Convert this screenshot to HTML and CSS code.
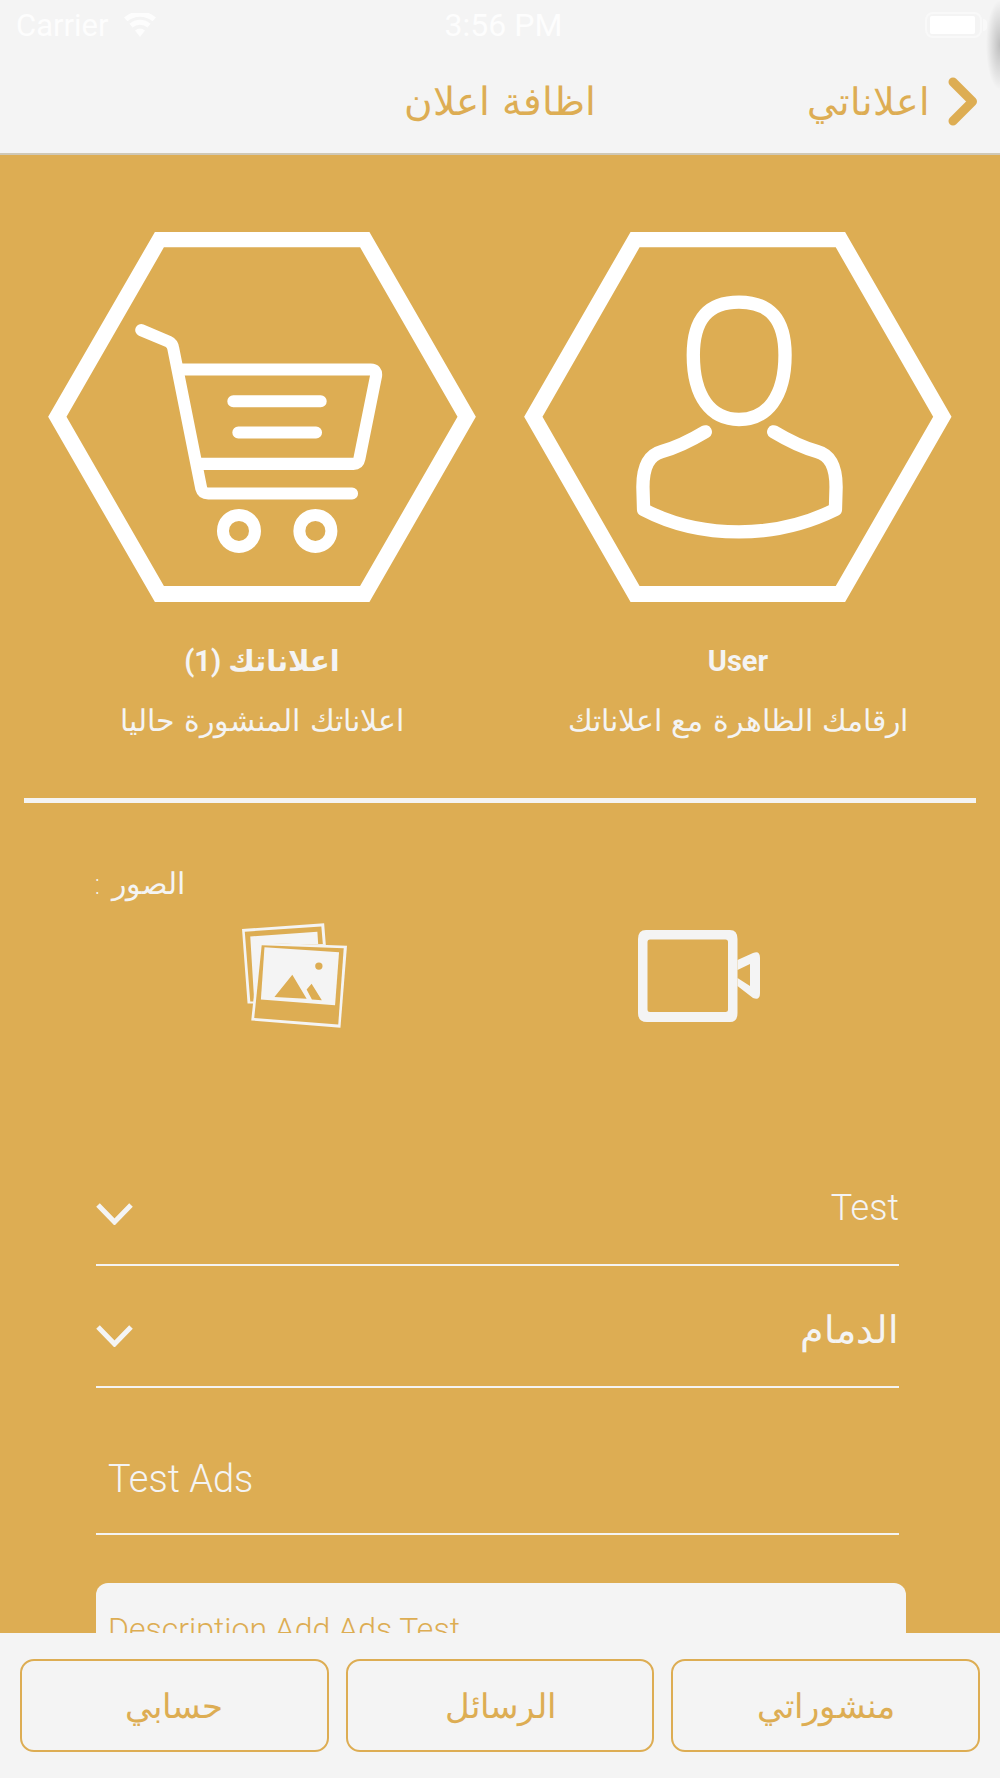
FILE: index.html
```html
<!DOCTYPE html>
<html lang="ar">
<head>
    <meta charset="UTF-8">
    <meta name="viewport" content="width=device-width, initial-scale=1.0">
    <title>اظافة اعلان</title>
    <link rel="stylesheet" href="styles.css">
</head>
<body>
    <div class="app">
        <header class="top">
            <div class="status">
                <div class="status-left">
                    <span>Carrier</span>
                    <svg class="wifi" viewBox="0 0 34 24"><path d="M17 24l-5-6.500a8 8 0 0 1 10 0zM9.500 14.500l-3-3.700a16 16 0 0 1 21 0l-3 3.700a11.500 11.500 0 0 0-15 0zM4.500 8.300L1 4.500a24 24 0 0 1 32 0l-3.500 3.800a19.500 19.500 0 0 0-25 0z"/></svg>
                </div>
                <span class="clock">3:56 PM</span>
                <div class="battery"><i></i></div>
            </div>
            <nav class="nav">
                <span></span>
                <h1 class="nav-title">اظافة اعلان</h1>
                <a class="back">
                    <span>اعلاناتي</span>
                    <svg viewBox="0 0 29 49"><path d="M5 5l19.500 19.500L5 44"/></svg>
                </a>
            </nav>
        </header>

        <main class="content">
            <section class="hero">
                <div class="hero-item">
                    <svg class="hex" viewBox="55 66 1282 1109">
                        <path class="hex-line" fill-rule="evenodd" d="M375 66H1018L1337 620 1018 1175H375L55 620ZM402 112L110 620 402 1127H990L1282 620 990 112Z"/>
                        <g class="hex-icon" stroke-width="36">
                            <path d="M334 360L415 394Q428 400 430 415L514 835Q518 850 535 850H966"/>
                            <path d="M445 478H1022Q1040 478 1038 497L988 745Q985 761 970 761H505"/>
                            <path d="M610 573H872M625 667H858"/>
                            <circle cx="627" cy="962" r="48"/>
                            <circle cx="856" cy="962" r="48"/>
                        </g>
                    </svg>
                    <h2 class="hero-title" dir="rtl">اعلاناتك (1)</h2>
                    <p class="hero-sub">اعلاناتك المنشورة حاليا</p>
                </div>
                <div class="hero-item">
                    <svg class="hex" viewBox="42 66 1282 1109">
                        <path class="hex-line" fill-rule="evenodd" d="M361 66H1004L1323 620 1004 1175H361L42 620ZM388 112L97 620 388 1127H976L1268 620 976 112Z"/>
                        <g class="hex-icon" stroke-width="40">
                            <path d="M686 276C780 276 824 330 824 435 824 560 770 628 686 628 602 628 549 560 549 435 549 330 592 276 686 276Z"/>
                            <path d="M585 665C540 692 500 712 455 724 415 735 398 770 398 830L400 898C480 940 580 965 686 965 790 965 890 940 975 898L977 830C977 770 960 735 920 724 875 712 835 692 790 665"/>
                        </g>
                    </svg>
                    <h2 class="hero-title">User</h2>
                    <p class="hero-sub">ارقامك الظاهرة مع اعلاناتك</p>
                </div>
            </section>

            <hr class="divider">

            <section class="media">
                <p class="media-label" dir="rtl">الصور :</p>
                <div class="media-icons">
                    <svg class="photos" viewBox="11.700 13.300 105.600 105">
                        <path class="light" d="M11.700 19L94.300 13.300 96 35 30 33 23.500 94 17.300 94Z"/>
                        <path class="gold" d="M14.500 21.700L91.500 16.500 93 34 88.300 34 87.500 21.700 20 26.500 24 92 20 92Z"/>
                        <path class="light" d="M29.300 32.700L117.300 36 110.700 118.300 21 111Z"/>
                        <path class="gold" d="M31.500 35.500L114 38.500 108.500 115 24 108.500Z"/>
                        <path class="light" d="M34.300 37.300L109.300 42.300 105.300 95.700 30.700 90Z"/>
                        <path class="gold" d="M62.300 65L76.700 89.300 44.300 87.300ZM81.700 74L92 90.700 82 90 76.700 80Z"/>
                        <circle class="gold" cx="89" cy="56.300" r="3.700"/>
                    </svg>
                    <svg class="video" viewBox="0 0 122 92">
                        <path fill-rule="evenodd" d="M8 0H92Q99.500 0 99.500 9V83Q99.500 92 92 92H9Q0 92 0 83V9Q0 0 8 0ZM12 9.500Q9.500 9.500 9.500 12V79.500Q9.500 82 12 82H87.500Q90 82 90 79.500V12Q90 9.500 87.500 9.500Z"/>
                        <path fill-rule="evenodd" d="M99.500 30L115 23Q122 20 122 28V63Q122 71 115 68L99.500 56ZM99.500 40V48L112 56V34Z"/>
                    </svg>
                </div>
            </section>

            <section class="form">
                <div class="select">
                    <svg class="caret" viewBox="0 0 37 22"><path d="M2 2l16.500 17L35 2"/></svg>
                    <span class="field-text">Test</span>
                </div>
                <div class="select">
                    <svg class="caret" viewBox="0 0 37 22"><path d="M2 2l16.500 17L35 2"/></svg>
                    <span class="field-text field-ar">الدمام</span>
                </div>
                <div class="input">
                    <span class="field-text">Test Ads</span>
                </div>
                <div class="description">Description Add Ads Test</div>
            </section>
        </main>

        <footer class="tabs">
            <a class="tab">حسابي</a>
            <a class="tab">الرسائل</a>
            <a class="tab">منشوراتي</a>
        </footer>
    </div>
</body>
</html>
```
FILE: styles.css
```css
* {
    box-sizing: border-box;
    margin: 0;
    padding: 0;
}
body {
    background-color: #f4f4f4;
    font-family: 'Roboto', 'DejaVu Sans', sans-serif;
    font-weight: 300;
}
.app {
    height: 1778px;
    display: flex;
    flex-direction: column;
    overflow: hidden;
}

/* top bar */
.top {
    position: relative;
    height: 155px;
    flex: none;
    background-color: #f4f4f4;
    border-bottom: 2px solid #cfc8b6;
}
.top::after {
    content: "";
    position: absolute;
    top: 0;
    right: 0;
    width: 14px;
    height: 90px;
    background: radial-gradient(ellipse 14px 45px at 100% 50%, rgba(0, 0, 0, .22), transparent);
}
.status {
    height: 50px;
    padding: 0 18px 0 16px;
    display: grid;
    grid-template-columns: 1fr auto 1fr;
    align-items: center;
    color: #fdfdfd;
    font-size: 31px;
    font-weight: 400;
}
.status-left {
    display: flex;
    align-items: center;
    gap: 14px;
}
.wifi {
    width: 34px;
    height: 24px;
    fill: #fdfdfd;
}
.clock {
    margin-left: 9px;
    font-size: 32px;
}
.battery {
    position: relative;
    justify-self: end;
    width: 57px;
    height: 26px;
    padding: 2px 5px 2px 3px;
    border: 2px solid #f9f9f9;
    border-radius: 8px;
}
.battery::after {
    content: "";
    position: absolute;
    top: 5px;
    right: -7px;
    width: 4px;
    height: 12px;
    background-color: #f9f9f9;
    border-radius: 0 4px 4px 0;
}
.battery i {
    display: block;
    height: 100%;
    background-color: #fff;
    border-radius: 2px;
}
.nav {
    height: 103px;
    display: grid;
    grid-template-columns: 1fr auto 1fr;
    align-items: center;
    color: #ddad53;
}
.nav-title {
    font-family: 'DejaVu Sans', sans-serif;
    font-size: 39px;
    font-weight: 200;
}
.back {
    justify-self: end;
    display: flex;
    align-items: center;
    gap: 18px;
    padding-right: 23px;
    font-family: 'DejaVu Sans', sans-serif;
    font-size: 38px;
    font-weight: 200;
}
.back svg {
    width: 29px;
    height: 49px;
    fill: none;
    stroke: #ddad53;
    stroke-width: 9;
    stroke-linecap: round;
    stroke-linejoin: round;
}

/* gold part */
.content {
    flex: 1;
    min-height: 0;
    overflow: hidden;
    background-color: #ddad53;
    color: #f4f4f4;
}
.hero {
    display: grid;
    grid-template-columns: 1fr 1fr;
    gap: 48px;
    padding: 77px 48px 0;
}
.hero-item {
    text-align: center;
}
.hex {
    display: block;
    width: 428px;
    height: 370px;
}
.hex-line {
    fill: #fff;
}
.hex-icon {
    fill: none;
    stroke: #fff;
    stroke-linecap: round;
    stroke-linejoin: round;
}
.hero-title {
    margin-top: 40px;
    font-size: 29px;
    line-height: 38px;
    font-weight: 700;
}
.hero-sub {
    margin-top: 18px;
    font-family: 'DejaVu Sans', sans-serif;
    font-size: 30px;
    font-weight: 200;
    line-height: 46px;
}
.divider {
    margin: 54px 24px 0;
    height: 5px;
    border: 0;
    background-color: #f4f4f4;
}
.media {
    margin-top: 61px;
    padding-left: 97px;
}
.media-label {
    width: 88px;
    font-family: 'DejaVu Sans', sans-serif;
    font-size: 30px;
    font-weight: 200;
    line-height: 40px;
    text-align: right;
    white-space: nowrap;
}
.media-icons {
    margin-top: 19px;
    padding-left: 145px;
    display: flex;
    align-items: center;
    gap: 291px;
}
.photos {
    width: 105px;
    height: 105px;
}
.light {
    fill: #f4f4f4;
}
.gold {
    fill: #ddad53;
}
.video {
    width: 122px;
    height: 92px;
    fill: #f4f4f4;
}
.form {
    margin-top: 116px;
    padding: 0 94px 0 96px;
}
.select,
.input {
    width: 803px;
    display: flex;
    align-items: flex-end;
    border-bottom: 2px solid #f4f4f4;
}
.select {
    height: 122px;
    justify-content: space-between;
    padding-bottom: 39px;
}
.input {
    height: 147px;
    padding: 0 0 37px 12px;
}
.caret {
    width: 37px;
    height: 22px;
    fill: none;
    stroke: #f4f4f4;
    stroke-width: 5;
}
.field-text {
    margin-bottom: -3px;
    font-size: 38px;
    line-height: 40px;
}
.select .field-text {
    font-size: 36px;
}
.select .field-ar {
    font-family: 'DejaVu Sans', sans-serif;
    font-size: 38px;
    font-weight: 200;
}
.description {
    width: 810px;
    height: 200px;
    margin-top: 48px;
    padding: 26px 12px;
    background-color: #f4f4f4;
    border-radius: 12px;
    color: #ddad53;
    font-size: 32px;
    line-height: 40px;
}

/* bottom buttons */
.tabs {
    height: 145px;
    flex: none;
    display: flex;
    gap: 17px;
    padding: 26px 20px;
    background-color: #f4f4f4;
}
.tab {
    flex: 1;
    display: flex;
    align-items: center;
    justify-content: center;
    border: 2px solid #ddad53;
    border-radius: 14px;
    color: #ddad53;
    font-family: 'DejaVu Sans', sans-serif;
    font-size: 34px;
    font-weight: 200;
}
```
